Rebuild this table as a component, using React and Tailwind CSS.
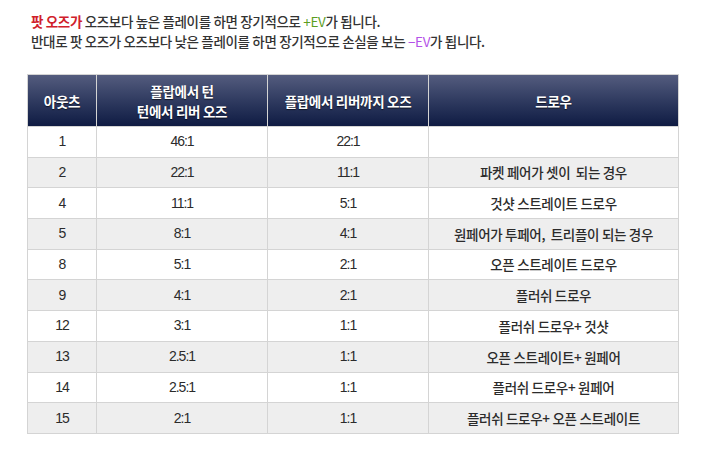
import React from "react";

const rows = [
  { outs: "1", turn: "46:1", river: "22:1", draw: "" },
  { outs: "2", turn: "22:1", river: "11:1", draw: "파켓 페어가 셋이  되는 경우" },
  { outs: "4", turn: "11:1", river: "5:1", draw: "것샷 스트레이트 드로우" },
  { outs: "5", turn: "8:1", river: "4:1", draw: "원페어가 투페어,  트리플이 되는 경우" },
  { outs: "8", turn: "5:1", river: "2:1", draw: "오픈 스트레이트 드로우" },
  { outs: "9", turn: "4:1", river: "2:1", draw: "플러쉬 드로우" },
  { outs: "12", turn: "3:1", river: "1:1", draw: "플러쉬 드로우+ 것샷" },
  { outs: "13", turn: "2.5:1", river: "1:1", draw: "오픈 스트레이트+ 원페어" },
  { outs: "14", turn: "2.5:1", river: "1:1", draw: "플러쉬 드로우+ 원페어" },
  { outs: "15", turn: "2:1", river: "1:1", draw: "플러쉬 드로우+ 오픈 스트레이트" },
];

const font = { fontFamily: '"Noto Sans CJK KR", "Noto Sans", sans-serif' };
const numFont = { fontFamily: '"Liberation Sans", Arial, sans-serif' };

export default function App() {
  return (
    <div className="w-[706px] h-[457px] bg-white overflow-hidden" style={font}>
      {/* 안내 문구 */}
      <div className="pt-[11px] pl-[31px] text-[13.5px] leading-[20px] font-medium text-[#333] tracking-[-0.35px]">
        <p>
          <span className="text-[#d0202a] font-bold">팟 오즈가</span> 오즈보다 높은 플레이를 하면 장기적으로{" "}
          <span className="text-[#5c9e1f] font-normal">+EV</span>가 됩니다.
        </p>
        <p>
          반대로 팟 오즈가 오즈보다 낮은 플레이를 하면 장기적으로 손실을 보는{" "}
          <span className="text-[#b452e8] font-normal">−EV</span>가 됩니다.
        </p>
      </div>

      {/* 아웃츠 표 */}
      <table className="mt-[23px] ml-[27px] w-[652px] table-fixed border-collapse text-[13.5px] text-[#2b2b2b]">
        <colgroup>
          <col className="w-[69px]" />
          <col className="w-[171px]" />
          <col className="w-[161px]" />
          <col />
        </colgroup>
        <thead>
          <tr className="h-[52px] bg-gradient-to-b from-[#545c7e] to-[#0e1a42] text-white text-[13.5px] leading-[20px] tracking-[-0.3px] [text-shadow:0_1px_1px_rgba(0,0,0,0.6)]">
            <th className="border border-[#d4d4d4] font-bold">아웃츠</th>
            <th className="border border-[#d4d4d4] font-bold">
              플랍에서 턴
              <br />
              턴에서 리버 오즈
            </th>
            <th className="border border-[#d4d4d4] font-bold">플랍에서 리버까지 오즈</th>
            <th className="border border-[#d4d4d4] font-bold">드로우</th>
          </tr>
        </thead>
        <tbody>
          {rows.map((r, i) => (
            <tr
              key={i}
              className={`h-[30.7px] ${i % 2 === 1 ? "bg-[#eeeeee]" : "bg-white"}`}
            >
              <td className="border border-[#d4d4d4] text-center text-[14px] tracking-[-1px]" style={numFont}>{r.outs}</td>
              <td className="border border-[#d4d4d4] text-center text-[14px] tracking-[-1px]" style={numFont}>{r.turn}</td>
              <td className="border border-[#d4d4d4] text-center text-[14px] tracking-[-1px]" style={numFont}>{r.river}</td>
              <td className="border border-[#d4d4d4] text-center font-medium tracking-[-0.3px] whitespace-pre">{r.draw}</td>
            </tr>
          ))}
        </tbody>
      </table>
    </div>
  );
}
